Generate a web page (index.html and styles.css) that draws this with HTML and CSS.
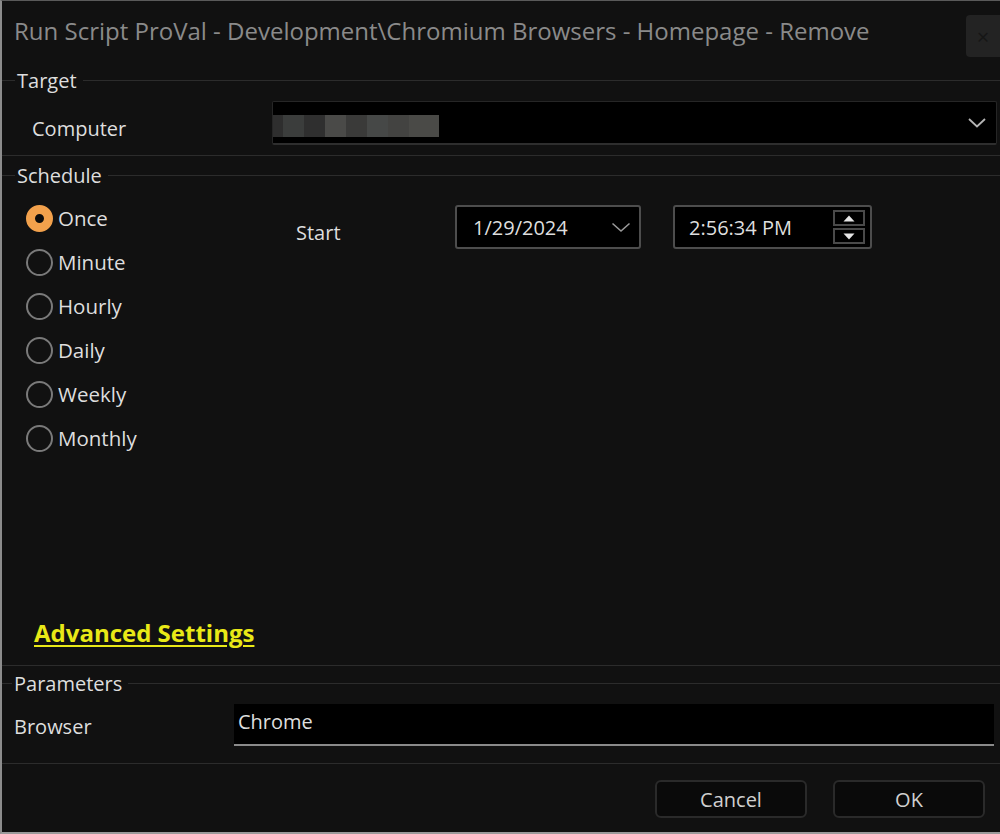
FILE: index.html
```html
<!DOCTYPE html>
<html lang="en">
<head>
<meta charset="utf-8">
<title>Run Script</title>
<link rel="stylesheet" href="styles.css">
</head>
<body>
<div class="dialog">
  <header class="titlebar">
    <span class="title">Run Script ProVal - Development\Chromium Browsers - Homepage - Remove</span>
    <button class="close" type="button">×</button>
  </header>

  <div class="group-head head-target"><span>Target</span></div>
  <div class="row row-computer">
    <label class="field-label computer-label">Computer</label>
    <div class="combo">
      <div class="redacted">
        <i class="px p1"></i><i class="px p2"></i><i class="px p3"></i><i class="px p4"></i><i class="px p5"></i><i class="px p6"></i><i class="px p7"></i><i class="px p8"></i>
      </div>
      <svg class="chev" width="18" height="10" viewBox="0 0 18 10"><path d="M1 1 L9 8.5 L17 1" fill="none" stroke="#b5b5b5" stroke-width="1.8"/></svg>
    </div>
  </div>
  <div class="sep"></div>

  <div class="group-head head-schedule"><span>Schedule</span></div>
  <div class="schedule">
    <div class="sched-top">
      <ul class="radios">
        <li class="radio checked"><span class="dot"></span>Once</li>
        <li class="radio"><span class="dot"></span>Minute</li>
        <li class="radio"><span class="dot"></span>Hourly</li>
        <li class="radio"><span class="dot"></span>Daily</li>
        <li class="radio"><span class="dot"></span>Weekly</li>
        <li class="radio"><span class="dot"></span>Monthly</li>
      </ul>
      <div class="start">
        <span class="start-label">Start</span>
        <div class="picker date">
          <span>1/29/2024</span>
          <svg width="20" height="11" viewBox="0 0 20 11"><path d="M1.5 1.5 L10 9 L18.5 1.5" fill="none" stroke="#9a9a9a" stroke-width="1.6"/></svg>
        </div>
        <div class="picker time">
          <span>2:56:34 PM</span>
          <div class="spin">
            <div class="spin-btn"><svg width="12" height="7" viewBox="0 0 12 7"><path d="M6 0.5 L11.5 6.5 L0.5 6.5 Z" fill="#e6e6e6"/></svg></div>
            <div class="spin-btn"><svg width="12" height="7" viewBox="0 0 12 7"><path d="M0.5 0.5 L11.5 0.5 L6 6.5 Z" fill="#e6e6e6"/></svg></div>
          </div>
        </div>
      </div>
    </div>
    <a class="adv" href="#">Advanced Settings</a>
  </div>
  <div class="sep"></div>

  <div class="group-head head-params"><span>Parameters</span></div>
  <div class="row row-browser">
    <label class="field-label browser-label">Browser</label>
    <div class="text-input">Chrome</div>
  </div>
  <div class="sep"></div>

  <div class="buttons">
    <button class="btn" type="button">Cancel</button>
    <button class="btn" type="button">OK</button>
  </div>
</div>
</body>
</html>
```

FILE: styles.css
```css
* { box-sizing: border-box; }

html, body {
  margin: 0;
  padding: 0;
  background: #111111;
}

body {
  font-family: "Open Sans", "Noto Sans", sans-serif;
  color: #dcdcdc;
}

.dialog {
  width: 1000px;
  height: 834px;
  background: #111111;
  border-top: 1px solid #5a5a5a;
  border-left: 2px solid #8c8c8c;
  border-bottom: 2px solid #9a9a9a;
  display: flex;
  flex-direction: column;
}

/* title bar */
.titlebar {
  height: 61px;
  display: flex;
  align-items: flex-start;
  justify-content: space-between;
  padding-left: 12px;
}

.title {
  margin-top: 14px;
  font-size: 24px;
  line-height: 32px;
  color: #8a8a8a;
  white-space: nowrap;
}

.close {
  margin-top: 14px;
  width: 34px;
  height: 42px;
  border: none;
  border-radius: 4px 0 0 4px;
  background: #232323;
  color: #161616;
  font-size: 22px;
  font-family: "Open Sans", sans-serif;
  padding: 0;
}

/* group headers */
.group-head {
  display: flex;
  align-items: center;
  font-size: 20px;
  color: #dedede;
}

.group-head::before {
  content: "";
  width: 13px;
  height: 1px;
  background: #2c2c2c;
  margin-right: 2px;
}

.group-head::after {
  content: "";
  flex: 1;
  height: 1px;
  background: #2c2c2c;
  margin-left: 6px;
}

.head-target { height: 36px; }
.head-schedule { height: 38px; }
.head-params { height: 34px; }
.head-params::before { width: 10px; }

.sep {
  height: 1px;
  background: #2c2c2c;
}

/* rows */
.row {
  display: flex;
  align-items: flex-start;
}

.field-label {
  font-size: 20px;
  line-height: 26px;
  color: #dedede;
}

.row-computer {
  height: 57px;
  padding-top: 3px;
}

.computer-label {
  width: 270px;
  padding-left: 30px;
  margin-top: 15px;
}

.combo {
  flex: 1;
  height: 44px;
  margin-right: 3px;
  background: #000;
  border: 1px solid #262626;
  border-bottom: 2px solid #2e2e2e;
  border-radius: 2px;
  display: flex;
  align-items: center;
  justify-content: space-between;
  padding-right: 10px;
}

.redacted {
  display: flex;
  align-self: flex-start;
  margin-top: 13px;
  height: 22px;
}

.px { display: block; width: 21px; height: 22px; }
.p1 { background: #2e2e2e; width: 10px; }
.p2 { background: #3b3d3c; }
.p3 { background: #2f2f2f; }
.p4 { background: #4a4a48; }
.p5 { background: #3a3a39; }
.p6 { background: #464847; }
.p7 { background: #434341; }
.p8 { background: #4a4a47; width: 30px; }

/* schedule */
.schedule {
  height: 471px;
  display: flex;
  flex-direction: column;
}

.sched-top {
  display: flex;
  align-items: flex-start;
}

.radios {
  list-style: none;
  margin: 0;
  padding: 2px 0 0 24px;
  width: 294px;
}

.radio {
  height: 44px;
  display: flex;
  align-items: center;
  font-size: 20.5px;
  color: #dedede;
}

.dot {
  width: 27px;
  height: 27px;
  border-radius: 50%;
  border: 2px solid #7a7a7a;
  margin-right: 5px;
  background: #111;
  flex: none;
}

.radio.checked .dot {
  border: 9px solid #f2a14c;
  background: #0c0c0c;
}

.start {
  display: flex;
  align-items: center;
  margin-top: 11px;
}

.start-label {
  font-size: 20px;
  color: #dedede;
  width: 159px;
  margin-top: 10px;
}

.picker {
  height: 44px;
  background: #000;
  border: 2px solid #4d4d4d;
  border-radius: 3px;
  display: flex;
  align-items: center;
  justify-content: space-between;
  font-size: 20px;
  color: #dedede;
}

.date {
  width: 186px;
  padding: 0 8px 0 16px;
}

.time {
  width: 199px;
  margin-left: 32px;
  padding: 0 5px 0 14px;
}

.spin {
  width: 32px;
  height: 34px;
  display: flex;
  flex-direction: column;
  gap: 2px;
}

.spin-btn {
  flex: 1;
  border: 2px solid #4a4a4a;
  display: flex;
  align-items: center;
  justify-content: center;
}

.adv {
  margin-top: auto;
  margin-bottom: 17px;
  margin-left: 32px;
  align-self: flex-start;
  font-size: 24px;
  line-height: 30px;
  font-weight: 700;
  color: #e9e917;
  text-decoration: underline;
  text-decoration-thickness: 2px;
  text-underline-offset: 3px;
}

/* parameters */
.row-browser {
  height: 63px;
  padding-top: 4px;
}

.browser-label {
  width: 232px;
  padding-left: 12px;
  margin-top: 10px;
}

.text-input {
  flex: 1;
  margin-right: 6px;
  height: 42px;
  background: #000;
  border-bottom: 2px solid #8a8a8a;
  font-size: 20px;
  line-height: 36px;
  padding-left: 4px;
  color: #dedede;
}

/* buttons */
.buttons {
  display: flex;
  justify-content: flex-end;
  gap: 26px;
  padding: 16px 15px 0 0;
}

.btn {
  width: 152px;
  height: 38px;
  background: #0a0a0a;
  border: 2px solid #2a2a2a;
  border-radius: 6px;
  color: #d0d0d0;
  font-family: "Open Sans", sans-serif;
  font-size: 20px;
  padding: 0;
}
```
